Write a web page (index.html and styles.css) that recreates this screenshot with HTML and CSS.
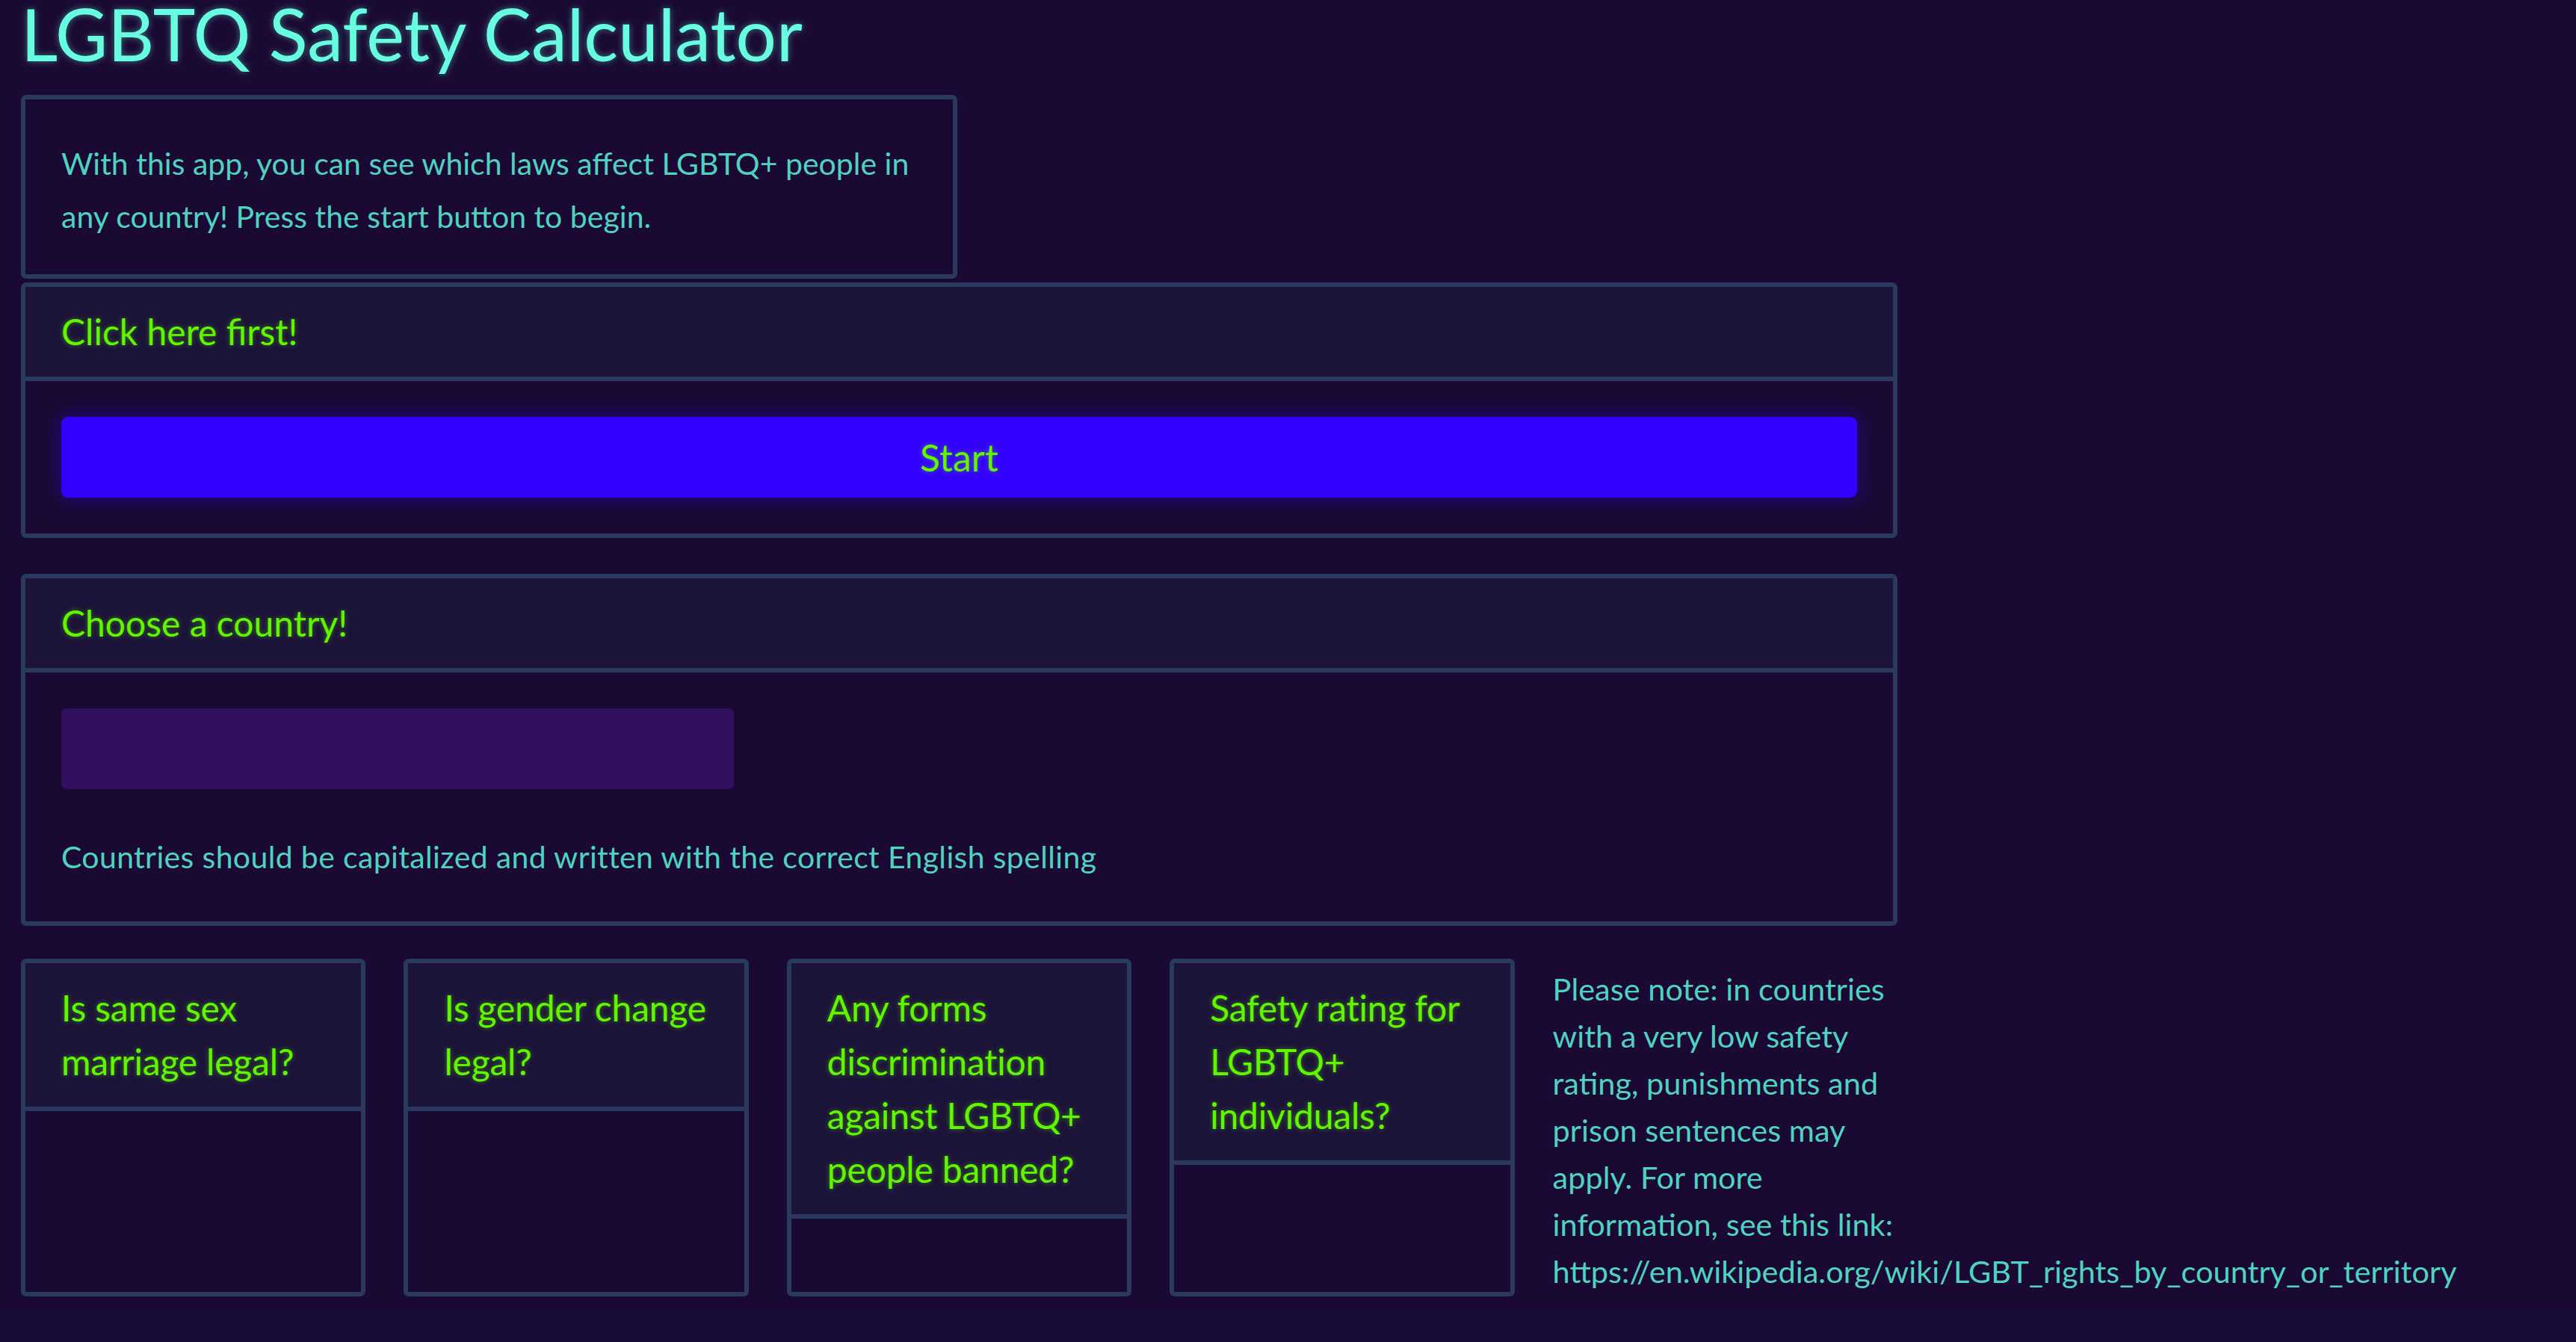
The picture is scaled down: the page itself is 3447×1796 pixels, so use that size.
FILE: index.html
```html
<!DOCTYPE html>
<html lang="en">
<head>
<meta charset="utf-8">
<title>LGBTQ Safety Calculator</title>
<link rel="stylesheet" href="styles.css">
</head>
<body>
<div class="page">
  <h1 class="title">LGBTQ Safety Calculator</h1>

  <div class="card card-intro">
    <div class="card-body intro-body">
      <p class="intro-text">With this app, you can see which laws affect LGBTQ+ people in any country! Press the start button to begin.</p>
    </div>
  </div>

  <div class="card card-start">
    <div class="card-header">Click here first!</div>
    <div class="card-body">
      <button class="btn-start" type="button">Start</button>
    </div>
  </div>

  <div class="card card-country">
    <div class="card-header">Choose a country!</div>
    <div class="card-body">
      <input class="country-input" type="text" aria-label="Country">
      <p class="hint">Countries should be capitalized and written with the correct English spelling</p>
    </div>
  </div>

  <div class="results">
    <div class="card result-card">
      <div class="card-header">Is same sex marriage legal?</div>
      <div class="card-body result-body"></div>
    </div>
    <div class="card result-card">
      <div class="card-header">Is gender change legal?</div>
      <div class="card-body result-body"></div>
    </div>
    <div class="card result-card">
      <div class="card-header">Any forms discrimination against LGBTQ+ people banned?</div>
      <div class="card-body result-body"></div>
    </div>
    <div class="card result-card">
      <div class="card-header">Safety rating for LGBTQ+ individuals?</div>
      <div class="card-body result-body"></div>
    </div>
    <p class="note">Please note: in countries with a very low safety rating, punishments and prison sentences may apply. For more information, see this link: https://en.wikipedia.org/wiki/LGBT_rights_by_country_or_territory</p>
  </div>
</div>
</body>
</html>
```

FILE: styles.css
```css
html {
  background: #170c37;
}

body {
  margin: 0;
  background: #1a0933;
  font-family: Lato, "Open Sans", "Liberation Sans", sans-serif;
  font-size: 41px;
  line-height: 1.5;
  color: #4fd3c0;
}

.page {
  width: 2511px;
  padding: 0 0 18px 28px;
}

.title {
  margin: 5px 0 42px;
  font-size: 96px;
  font-weight: 400;
  line-height: 80px;
  color: #68fde0;
  text-shadow: 0 0 10px rgba(104, 253, 224, 0.45);
}

.card {
  box-sizing: border-box;
  border: 6px solid #2a3a5f;
  border-radius: 7px;
  background: #1a0933;
  display: flex;
  flex-direction: column;
  min-width: 0;
}

.card-header {
  background: #1c1339;
  border-bottom: 6px solid #2a3a5f;
  padding: 24px 48px;
  font-size: 48px;
  line-height: 72px;
  color: #62f500;
  text-shadow: 0 0 6px rgba(98, 245, 0, 0.45);
}

.card-body {
  padding: 48px;
}

.card-intro {
  width: 1253px;
}

.intro-body {
  padding: 50px 48px 42px;
}

.intro-text {
  margin: 0;
  line-height: 71px;
}

.card-start {
  margin-top: 5px;
}

.btn-start {
  display: block;
  width: 100%;
  box-sizing: border-box;
  height: 108px;
  border: 0;
  border-radius: 9px;
  background: #3300ff;
  box-shadow: 0 0 22px 4px rgba(51, 0, 255, 0.35);
  font-family: inherit;
  font-size: 50px;
  line-height: 75px;
  color: #62f500;
  text-shadow: 0 0 6px rgba(98, 245, 0, 0.45);
  padding: 0;
}

.card-country {
  margin-top: 48px;
}

.country-input {
  display: block;
  box-sizing: border-box;
  width: 900px;
  height: 108px;
  border: 0;
  border-radius: 7px;
  background: #320f60;
  outline: none;
}

.hint {
  margin: 60px 0 7px;
  letter-spacing: 0.35px;
}

.results {
  margin-top: 44px;
  display: grid;
  grid-template-columns: repeat(5, minmax(0, 1fr));
  column-gap: 51px;
  align-items: stretch;
}

.result-card .card-header {
  padding-right: 36px;
  letter-spacing: -0.2px;
}

.result-body {
  flex: 1;
  min-height: 98px;
  box-sizing: border-box;
}

.note {
  margin: 0;
  padding-top: 9px;
  min-width: 0;
  font-size: 41.5px;
  line-height: 63px;
}
```
